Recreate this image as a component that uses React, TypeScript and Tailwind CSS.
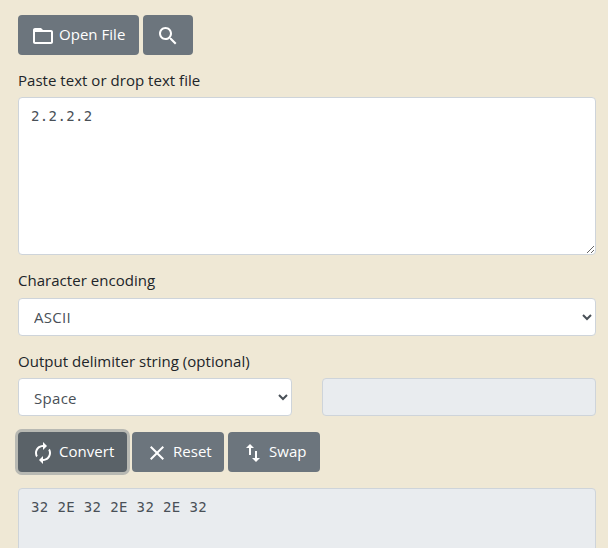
import type { ReactNode } from "react";

function Icon({ d }: { d: string }) {
  return (
    <svg viewBox="0 0 24 24" className="mt-0.5 size-6 shrink-0 fill-current">
      <path d={d} />
    </svg>
  );
}

const icons = {
  folder:
    "M20 6h-8l-2-2H4c-1.1 0-1.99.9-1.99 2L2 18c0 1.1.9 2 2 2h16c1.1 0 2-.9 2-2V8c0-1.1-.9-2-2-2zm0 12H4V8h16v10z",
  search:
    "M15.5 14h-.79l-.28-.27C15.41 12.59 16 11.11 16 9.5 16 5.91 13.09 3 9.5 3S3 5.91 3 9.5 5.91 16 9.5 16c1.61 0 3.09-.59 4.23-1.57l.27.28v.79l5 4.99L20.49 19l-4.99-5zm-6 0C7.01 14 5 11.99 5 9.5S7.01 5 9.5 5 14 7.01 14 9.5 11.99 14 9.5 14z",
  convert:
    "M12 6v3l4-4-4-4v3c-4.42 0-8 3.58-8 8 0 1.57.46 3.03 1.24 4.26L6.7 14.8c-.45-.83-.7-1.79-.7-2.8 0-3.31 2.69-6 6-6zm6.76 1.74L17.3 9.2c.44.84.7 1.79.7 2.8 0 3.31-2.69 6-6 6v-3l-4 4 4 4v-3c4.42 0 8-3.58 8-8 0-1.57-.46-3.03-1.24-4.26z",
  close:
    "M19 6.41L17.59 5 12 10.59 6.41 5 5 6.41 10.59 12 5 17.59 6.41 19 12 13.41 17.59 19 19 17.59 13.41 12z",
  swap: "M16 17.01V10h-2v7.01h-3L15 21l4-3.99h-3zM9 3L5 6.99h3V14h2V6.99h3L9 3z",
};

function Button({ icon, className, children }: { icon: string; className: string; children?: ReactNode }) {
  return (
    <button type="button" className={`flex h-10 items-center gap-1 rounded pl-[13px] text-white ${className}`}>
      <Icon d={icon} />
      {children && <span className="-mt-0.5 whitespace-nowrap">{children}</span>}
    </button>
  );
}

const field = "block w-full rounded border border-[#ced4da] text-[#495057]";
const select = "h-[38px] bg-white pr-[13px] pl-[11px] tracking-[0.3px]";
const mono = "px-3 py-1.5 font-['DejaVu_Sans_Mono',monospace] text-[14px] leading-6 tracking-[0.37px]";

export default function App() {
  return (
    <main className="h-[548px] overflow-hidden bg-[#efe8d5] pt-[15px] pr-3 pl-[18px] font-['Open_Sans',sans-serif] text-[15px] leading-6 tracking-[0.03px] text-[#212529]">
      <div className="flex gap-1">
        <Button icon={icons.folder} className="w-[121px] bg-[#6c757d]">Open File</Button>
        <Button icon={icons.search} className="w-[50px] bg-[#6c757d]" />
      </div>
      <label className="mt-[13px] mb-[5px] block">Paste text or drop text file</label>
      <textarea className={`${field} ${mono} h-[158px] bg-white`} defaultValue="2.2.2.2" spellCheck={false} />
      <label className="mt-[13px] mb-[6px] block">Character encoding</label>
      <select className={`${field} ${select}`}>
        <option>ASCII</option>
      </select>
      <label className="mt-[13px] mb-[5px] block">Output delimiter string (optional)</label>
      <div className="grid grid-cols-2 gap-[30px]">
        <select className={`${field} ${select} pt-px`}>
          <option>Space</option>
        </select>
        <input className={`${field} h-[38px] bg-[#e9ecef] px-3`} disabled />
      </div>
      <div className="mt-4 flex gap-1">
        <Button icon={icons.convert} className="mr-px w-[109px] bg-[#5a6268] shadow-[0_0_0_3px_rgba(130,138,145,0.5)]">Convert</Button>
        <Button icon={icons.close} className="w-[92px] bg-[#6c757d]">Reset</Button>
        <Button icon={icons.swap} className="w-[92px] bg-[#6c757d]">Swap</Button>
      </div>
      <textarea className={`${field} ${mono} mt-4 h-[158px] bg-[#e9ecef]`} value="32 2E 32 2E 32 2E 32" readOnly spellCheck={false} />
    </main>
  );
}
